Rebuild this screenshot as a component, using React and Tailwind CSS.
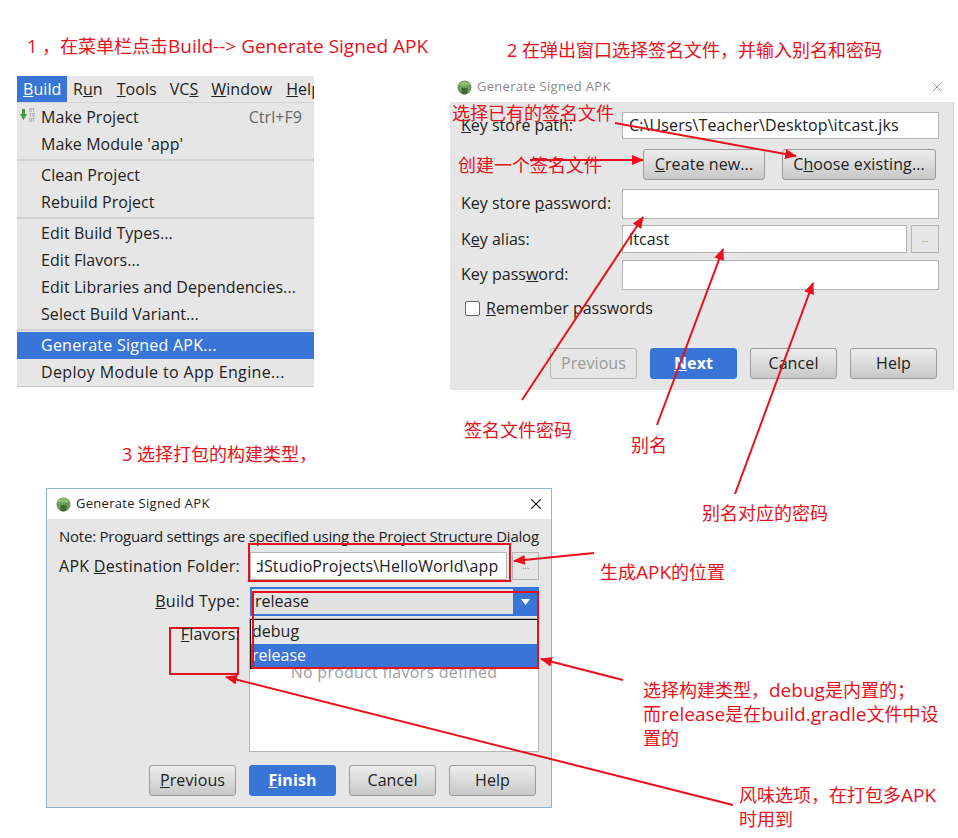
import { X } from "lucide-react"

const uiFont = "font-['Open_Sans','Noto_Sans',sans-serif]"
const noteClass = "absolute whitespace-nowrap text-[#e8101c] text-[18px] leading-[24px] font-['Open_Sans','Noto_Sans_CJK_SC',sans-serif]"
const latinClass = "text-[19px]"

const arrows = [
    [615, 123, 796, 156],
    [530, 160, 643, 160],
    [522, 400, 643, 217],
    [657, 425, 723, 249],
    [735, 494, 813, 283],
    [594, 553, 514, 561],
    [623, 680, 541, 659],
    [733, 805, 226, 677],
]

function AndroidIcon() {
    return (
        <svg width="15" height="15" viewBox="0 0 15 15" className="shrink-0">
            <circle cx="7.5" cy="7.5" r="7" fill="#6f9a5c" />
            <path d="M2 4.5a6.5 6.5 0 0 1 11 0l-2 1H4z" fill="#8fbf6e" />
            <path d="M4.5 8h6v3.5a3 3 0 0 1-6 0z" fill="#3f6b3a" />
        </svg>
    )
}

function Button({ children, primary, disabled, className = "" }) {
    const tone = primary
        ? "bg-[#3875d7] border-[#3875d7] text-white font-bold"
        : disabled
            ? "bg-[#e6e6e6] border-[#b4b4b4] text-[#9a9a9a]"
            : "bg-gradient-to-b from-[#ededed] to-[#c8c8c8] border-[#9c9c9c] text-[#222]"
    return (
        <div className={`h-[31px] flex items-center justify-center pb-[2px] border rounded-[3px] text-[16px] tracking-[0.1px] ${tone} ${className}`}>
            {children}
        </div>
    )
}

function Field({ children, className = "" }) {
    return (
        <div className={`bg-white border border-[#b5b5b5] flex items-center pl-[6px] text-[16px] text-[#222] whitespace-nowrap overflow-hidden tracking-[0.12px] ${className}`}>
            {children}
        </div>
    )
}

function Dots({ className = "" }) {
    return (
        <div className={`border border-[#b5b5b5] bg-[#e6e6e6] flex items-center justify-center text-[9px] text-[#777] ${className}`}>...</div>
    )
}

function BuildMenu() {
    const groups = [
        [["Make Project", "Ctrl+F9"], ["Make Module 'app'"]],
        [["Clean Project"], ["Rebuild Project"]],
        [["Edit Build Types..."], ["Edit Flavors..."], ["Edit Libraries and Dependencies..."], ["Select Build Variant..."]],
    ]
    return (
        <div className={`absolute left-[17px] top-[76px] w-[297px] bg-[#e6e6e6] text-[16px] text-[#222] tracking-[0.06px] ${uiFont}`}>
            <div className="h-[27px] flex items-center overflow-hidden border-b border-[#d4d4d4] whitespace-nowrap">
                <div className="h-full w-[50px] shrink-0 bg-[#3875d7] text-white pl-[6px] flex items-center"><u>B</u>uild</div>
                <span className="ml-[6px]">R<u>u</u>n</span>
                <span className="ml-[14px]"><u>T</u>ools</span>
                <span className="ml-[13px]">VC<u>S</u></span>
                <span className="ml-[13px]"><u>W</u>indow</span>
                <span className="ml-[14px]"><u>H</u>elp</span>
            </div>
            {groups.map((group, i) => (
                <div key={i} className="border-b-2 border-[#d2d2d2] pb-[2px]">
                    {group.map(([label, shortcut]) => (
                        <div key={label} className="h-[27px] flex items-center pl-[24px] pr-[12px] relative">
                            {shortcut && (
                                <svg width="22" height="16" viewBox="0 0 22 16" className="absolute left-[2px] top-[4px]">
                                    <path d="M3 2h3v5h2l-3.5 6-3.5-6h2z" fill="#3f9a45" />
                                    <text x="10" y="5" fontSize="5" fill="#666">01</text>
                                    <text x="10" y="10" fontSize="5" fill="#666">10</text>
                                    <text x="10" y="15" fontSize="5" fill="#666">01</text>
                                </svg>
                            )}
                            <span>{label}</span>
                            {shortcut && <span className="ml-auto text-[#666]">{shortcut}</span>}
                        </div>
                    ))}
                </div>
            ))}
            <div className="h-[27px] mt-[1px] pb-[2px] flex items-center pl-[24px] bg-[#3875d7] text-white tracking-[0.25px]">Generate Signed APK...</div>
            <div className="h-[28px] pb-[2px] flex items-center pl-[24px] border-b border-[#c8c8c8] tracking-[0.35px]">Deploy Module to App Engine...</div>
        </div>
    )
}

function KeyDialog() {
    const labelClass = "w-[161px] shrink-0 whitespace-nowrap"
    return (
        <div className={`absolute left-[450px] top-[72px] w-[504px] text-[16px] text-[#222] ${uiFont}`}>
            <div className="h-[30px] bg-white flex items-center pl-[7px] pr-[9px] gap-[5px] text-[13px] text-[#8a8a8a] tracking-[0.3px]">
                <AndroidIcon />
                <span>Generate Signed APK</span>
                <X className="ml-auto w-[16px] h-[16px] text-[#999]" strokeWidth={1.5} />
            </div>
            <div className="h-[288px] bg-[#e6e6e6] pl-[11px] pr-[14px] pt-[10px] border-r border-[#d0d0d0] flex flex-col">
                <div className="flex items-center">
                    <span className={`${labelClass} pb-[2px]`}><u>K</u>ey store path:</span>
                    <Field className="flex-1 h-[27px] pb-[2px]">C:\Users\Teacher\Desktop\itcast.jks</Field>
                </div>
                <div className="flex mt-[10px] pl-[182px] pr-[3px] justify-between">
                    <Button className="w-[122px]"><span><u>C</u>reate new...</span></Button>
                    <Button className="w-[154px]"><span>C<u>h</u>oose existing...</span></Button>
                </div>
                <div className="flex items-center mt-[9px]">
                    <span className={`${labelClass} pb-[2px]`}>Key store <u>p</u>assword:</span>
                    <Field className="flex-1 h-[30px]" />
                </div>
                <div className="flex items-center mt-[6px]">
                    <span className={labelClass}>K<u>e</u>y alias:</span>
                    <Field className="flex-1 h-[28px]">itcast</Field>
                    <Dots className="w-[28px] h-[28px] ml-[4px]" />
                </div>
                <div className="flex items-center mt-[7px]">
                    <span className={`${labelClass} pb-[2px]`}>Key pass<u>w</u>ord:</span>
                    <Field className="flex-1 h-[30px]" />
                </div>
                <div className="flex items-center mt-[11px] pl-[4px] gap-[6px] h-[15px]">
                    <span className="w-[15px] h-[15px] bg-white border border-[#666] rounded-[2px]" />
                    <span className="pb-[2px]"><u>R</u>emember passwords</span>
                </div>
                <div className="flex mt-[32px] pl-[89px] gap-[13px]">
                    <Button disabled className="w-[87px]">Previous</Button>
                    <Button primary className="w-[87px]"><span><u>N</u>ext</span></Button>
                    <Button className="w-[87px]">Cancel</Button>
                    <Button className="w-[87px]">Help</Button>
                </div>
            </div>
        </div>
    )
}

function BuildTypeDialog() {
    const labelClass = "w-[181px] shrink-0 text-right whitespace-nowrap tracking-[0.25px]"
    return (
        <div className={`absolute left-[46px] top-[488px] w-[506px] h-[320px] border border-[#8fb4cf] flex flex-col text-[16px] text-[#222] ${uiFont}`}>
            <div className="h-[30px] bg-white flex items-center pl-[9px] pr-[6px] gap-[5px] text-[13px] tracking-[0.3px]">
                <AndroidIcon />
                <span>Generate Signed APK</span>
                <X className="ml-auto w-[18px] h-[18px]" strokeWidth={1.5} />
            </div>
            <div className="flex-1 bg-[#e6e6e6] pl-[12px] pr-[12px] flex flex-col">
                <div className="h-[33px] pt-[2px] flex items-center text-[15px] whitespace-nowrap tracking-[-0.23px]">Note: Proguard settings are specified using the Project Structure Dialog</div>
                <div className="flex items-center">
                    <span className={labelClass}>APK <u>D</u>estination Folder:</span>
                    <Field className="ml-[10px] w-[257px] h-[28px]">
                        <div className="overflow-hidden">
                            <span className="block -ml-[3px]">dStudioProjects\HelloWorld\app</span>
                        </div>
                    </Field>
                    <Dots className="w-[27px] h-[28px] ml-[5px]" />
                </div>
                <div className="flex items-center mt-[7px]">
                    <span className={`${labelClass} pb-[2px]`}><u>B</u>uild Type:</span>
                    <div className="ml-[10px] flex-1 h-[29px] border-2 border-[#3875d7] bg-[#e2e2e2] flex items-center pl-[3px]">
                        <span className="pb-[2px]">release</span>
                        <div className="ml-auto h-full w-[24px] bg-[#3875d7] flex items-center justify-center">
                            <svg width="9" height="6" viewBox="0 0 9 6"><path d="M0 0h9L4.5 6z" fill="#fff" /></svg>
                        </div>
                    </div>
                </div>
                <div className="flex mt-[2px]">
                    <span className={`${labelClass} pt-[4px] relative z-10`}><u>F</u>lavors:</span>
                    <div className="ml-[9px] flex-1 h-[134px] bg-white border border-[#b5b5b5] relative flex justify-center pt-[41px] text-[#a0a0a0] whitespace-nowrap leading-[24px] tracking-[0.25px]">
                        No product flavors defined
                        <div className="absolute left-0 top-0 w-[288px] h-[50px] border border-[#111] bg-[#e6e6e6] text-[#222] tracking-normal">
                            <div className="h-[24px] pb-[2px] flex items-center pl-[1px]">debug</div>
                            <div className="h-[24px] pb-[2px] flex items-center pl-[1px] bg-[#3875d7] text-white">release</div>
                        </div>
                    </div>
                </div>
                <div className="flex mt-[13px] pl-[90px] gap-[13px]">
                    <Button className="w-[87px]"><span><u>P</u>revious</span></Button>
                    <Button primary className="w-[87px]"><span><u>F</u>inish</span></Button>
                    <Button className="w-[87px]">Cancel</Button>
                    <Button className="w-[87px]">Help</Button>
                </div>
            </div>
        </div>
    )
}

export default function App() {
    return (
        <div className="relative w-[958px] h-[838px] bg-white overflow-hidden">
            <BuildMenu />
            <KeyDialog />
            <BuildTypeDialog />

            <div className={`${noteClass} left-[27px] top-[34px]`}>1 ，在菜单栏点击<span className={latinClass}>Build--&gt; Generate Signed APK</span></div>
            <div className={`${noteClass} left-[507px] top-[38px]`}>2 在弹出窗口选择签名文件，并输入别名和密码</div>
            <div className={`${noteClass} left-[452px] top-[101px]`}>选择已有的签名文件</div>
            <div className={`${noteClass} left-[458px] top-[153px]`}>创建一个签名文件</div>
            <div className={`${noteClass} left-[464px] top-[418px]`}>签名文件密码</div>
            <div className={`${noteClass} left-[631px] top-[433px]`}>别名</div>
            <div className={`${noteClass} left-[122px] top-[442px]`}>3 选择打包的构建类型，</div>
            <div className={`${noteClass} left-[702px] top-[501px]`}>别名对应的密码</div>
            <div className={`${noteClass} left-[600px] top-[560px]`}>生成<span className={latinClass}>APK</span>的位置</div>
            <div className={`${noteClass} left-[643px] top-[678px]`}>
                选择构建类型，<span className={latinClass}>debug</span>是内置的；<br />而<span className={latinClass}>release</span>是在<span className={latinClass}>build.gradle</span>文件中设<br />置的
            </div>
            <div className={`${noteClass} left-[739px] top-[783px]`}>
                风味选项，在打包多<span className={latinClass}>APK</span><br />时用到
            </div>

            <div className="absolute left-[248px] top-[543px] w-[263px] h-[39px] border-2 border-[#e8101c]" />
            <div className="absolute left-[252px] top-[591px] w-[287px] h-[78px] border-2 border-[#e8101c]" />
            <div className="absolute left-[169px] top-[627px] w-[70px] h-[48px] border-2 border-[#e8101c]" />

            <svg className="absolute left-0 top-0 pointer-events-none" width="958" height="838">
                <defs>
                    <marker id="head" markerUnits="userSpaceOnUse" markerWidth="12" markerHeight="10" refX="11" refY="5" orient="auto">
                        <path d="M0 0L12 5L0 10z" fill="#e8101c" />
                    </marker>
                </defs>
                {arrows.map(([x1, y1, x2, y2], i) => (
                    <line key={i} x1={x1} y1={y1} x2={x2} y2={y2} stroke="#e8101c" strokeWidth="2" markerEnd="url(#head)" />
                ))}
            </svg>
        </div>
    )
}
